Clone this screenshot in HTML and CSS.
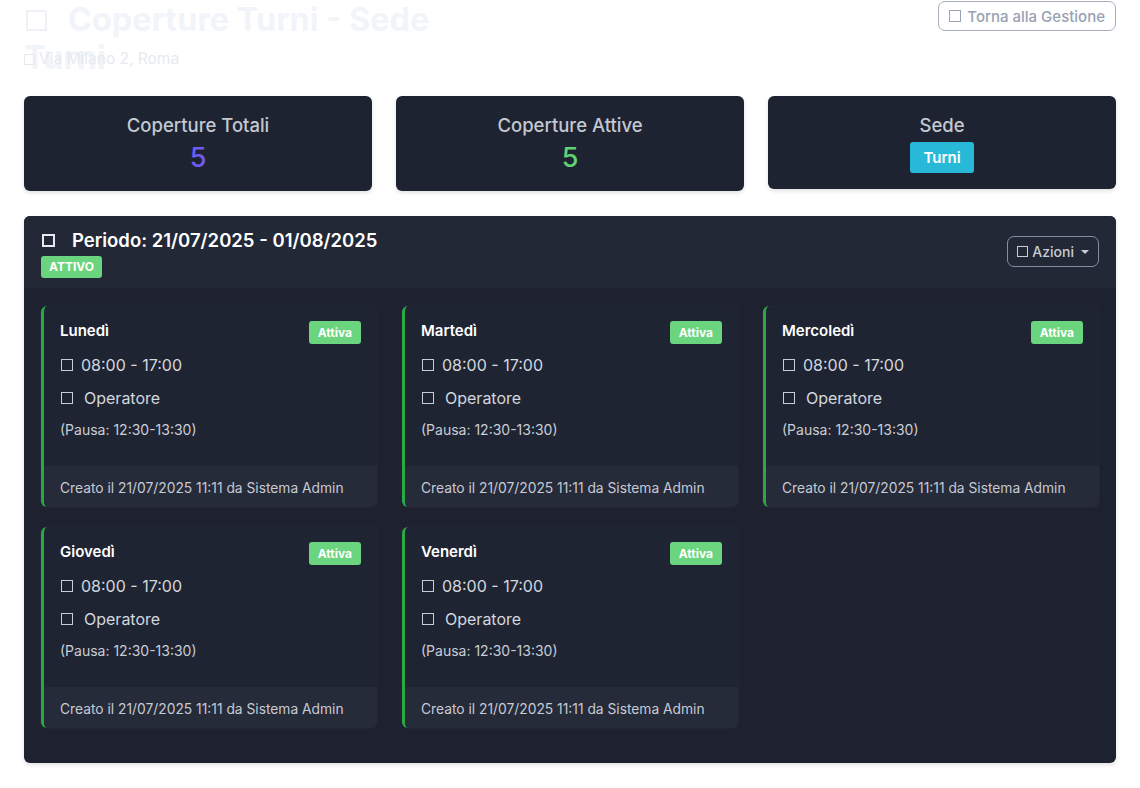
FILE: index.html
```html
<!DOCTYPE html>
<html lang="it">
<head>
<meta charset="utf-8">
<title>Coperture Turni</title>
<link rel="stylesheet" href="styles.css">
</head>
<body>
<div class="page">
  <div class="top">
    <div class="heading">
      <h1 class="title"><span class="ico ico-lg"></span>Coperture Turni - Sede Turni</h1>
      <p class="subtitle"><span class="ico ico-sm"></span>Via Milano 2, Roma</p>
    </div>
    <button class="btn-back"><span class="ico ico-btn"></span>Torna alla Gestione</button>
  </div>

  <div class="stats">
    <div class="stat">
      <div class="stat-label">Coperture Totali</div>
      <div class="stat-value purple">5</div>
    </div>
    <div class="stat">
      <div class="stat-label">Coperture Attive</div>
      <div class="stat-value green">5</div>
    </div>
    <div class="stat stat-sede">
      <div class="stat-label">Sede</div>
      <span class="badge-info">Turni</span>
    </div>
  </div>

  <div class="period">
    <div class="period-head">
      <div>
        <h2 class="period-title"><span class="ico ico-head"></span>Periodo: 21/07/2025 - 01/08/2025</h2>
        <span class="badge-green badge-upper">ATTIVO</span>
      </div>
      <button class="btn-actions"><span class="ico ico-btn2"></span>Azioni<span class="caret"></span></button>
    </div>
    <div class="period-body">
      <div class="shift">
        <div class="shift-main">
          <div class="shift-top"><span class="day">Lunedì</span><span class="badge-green">Attiva</span></div>
          <div class="row"><span class="ico ico-row"></span>08:00 - 17:00</div>
          <div class="row"><span class="ico ico-row"></span><span class="op">Operatore</span></div>
          <div class="pause">(Pausa: 12:30-13:30)</div>
        </div>
        <div class="shift-foot">Creato il 21/07/2025 11:11 da Sistema Admin</div>
      </div>
      <div class="shift">
        <div class="shift-main">
          <div class="shift-top"><span class="day">Martedì</span><span class="badge-green">Attiva</span></div>
          <div class="row"><span class="ico ico-row"></span>08:00 - 17:00</div>
          <div class="row"><span class="ico ico-row"></span><span class="op">Operatore</span></div>
          <div class="pause">(Pausa: 12:30-13:30)</div>
        </div>
        <div class="shift-foot">Creato il 21/07/2025 11:11 da Sistema Admin</div>
      </div>
      <div class="shift">
        <div class="shift-main">
          <div class="shift-top"><span class="day">Mercoledì</span><span class="badge-green">Attiva</span></div>
          <div class="row"><span class="ico ico-row"></span>08:00 - 17:00</div>
          <div class="row"><span class="ico ico-row"></span><span class="op">Operatore</span></div>
          <div class="pause">(Pausa: 12:30-13:30)</div>
        </div>
        <div class="shift-foot">Creato il 21/07/2025 11:11 da Sistema Admin</div>
      </div>
      <div class="shift">
        <div class="shift-main">
          <div class="shift-top"><span class="day">Giovedì</span><span class="badge-green">Attiva</span></div>
          <div class="row"><span class="ico ico-row"></span>08:00 - 17:00</div>
          <div class="row"><span class="ico ico-row"></span><span class="op">Operatore</span></div>
          <div class="pause">(Pausa: 12:30-13:30)</div>
        </div>
        <div class="shift-foot">Creato il 21/07/2025 11:11 da Sistema Admin</div>
      </div>
      <div class="shift">
        <div class="shift-main">
          <div class="shift-top"><span class="day">Venerdì</span><span class="badge-green">Attiva</span></div>
          <div class="row"><span class="ico ico-row"></span>08:00 - 17:00</div>
          <div class="row"><span class="ico ico-row"></span><span class="op">Operatore</span></div>
          <div class="pause">(Pausa: 12:30-13:30)</div>
        </div>
        <div class="shift-foot">Creato il 21/07/2025 11:11 da Sistema Admin</div>
      </div>
    </div>
  </div>
</div>
</body>
</html>
```

FILE: styles.css
```css
* { box-sizing: border-box; }
html, body { margin: 0; padding: 0; background: #ffffff; }
body {
  font-family: Inter, "Noto Sans", "Liberation Sans", sans-serif;
  color: #d1d5db;
}
.page { padding: 0 24px 24px 24px; }

.ico {
  display: inline-block;
  border-style: solid;
  flex: none;
}

.top {
  display: flex;
  justify-content: space-between;
  align-items: flex-start;
  height: 96px;
}
.heading { width: 440px; }
.title {
  margin: 0;
  padding-top: 1px;
  height: 40px;
  font-size: 32.4px;
  line-height: 38px;
  font-weight: 700;
  color: #f1f4f8;
}
.ico-lg {
  width: 21px; height: 21px;
  border-width: 2.5px;
  border-color: #eef2f6;
  margin: 0 21px 0 2px;
  vertical-align: 0px;
}
.subtitle {
  margin: 0;
  margin-top: 8px;
  font-size: 15.5px;
  line-height: 22px;
  color: #e6eaef;
  display: flex;
  align-items: center;
}
.ico-sm {
  width: 11px; height: 11px;
  border-width: 1.5px;
  border-color: #e6eaef;
  margin-right: 4px;
}

.btn-back {
  margin-top: 1px;
  height: 30px;
  padding: 0 10px;
  background: #fff;
  border: 1px solid #a5adbf;
  border-radius: 7px;
  font-family: inherit;
  font-size: 15px;
  font-weight: 500;
  color: #98a1b3;
  display: flex;
  align-items: center;
}
.ico-btn {
  width: 12px; height: 12px;
  border-width: 1.5px;
  border-color: #98a1b3;
  margin-right: 6px;
}

.stats {
  display: grid;
  grid-template-columns: repeat(3, 1fr);
  gap: 24px;
  margin-bottom: 25px;
}
.stat {
  background: #1e2332;
  border-radius: 6px;
  height: 95px;
  box-shadow: 0 2px 4px rgba(0,0,0,0.12);
  display: flex;
  flex-direction: column;
  align-items: center;
  padding-top: 18px;
}
.stat-sede { height: 93px; }
.stat-label {
  font-size: 18.5px;
  line-height: 23px;
  font-weight: 500;
  color: #c3c8d1;
}
.stat-value {
  font-size: 27px;
  line-height: 32px;
  margin-top: 5px;
  font-weight: 500;
}
.purple { color: #6d5cf3; }
.green { color: #5fd274; }
.badge-info {
  margin-top: 5px;
  background: #27b9d7;
  color: #ffffff;
  font-size: 15px;
  font-weight: 600;
  line-height: 31px;
  height: 31px;
  padding: 0 13px;
  border-radius: 3px;
}

.period {
  background: #1d2130;
  border-radius: 6px;
  overflow: hidden;
  box-shadow: 0 2px 4px rgba(0,0,0,0.12);
}
.period-head {
  background: #232837;
  height: 72px;
  padding: 12px 17px 0 17px;
  display: flex;
  justify-content: space-between;
  align-items: flex-start;
}
.period-title {
  margin: 0;
  font-size: 18.5px;
  line-height: 24px;
  font-weight: 600;
  color: #ffffff;
  display: flex;
  align-items: center;
}
.ico-head {
  width: 13px; height: 13px;
  border-width: 2px;
  border-color: #e6e9ee;
  margin: 0 17px 0 1px;
}
.badge-green {
  display: inline-block;
  background: #6bd47e;
  color: #ffffff;
  font-size: 12px;
  font-weight: 700;
  line-height: 23px;
  height: 23px;
  padding: 0 9px;
  border-radius: 3px;
}
.badge-upper {
  margin-top: 4px;
  height: 22px;
  line-height: 22px;
  padding: 0 8px;
}
.btn-actions {
  margin-top: 8px;
  height: 31px;
  padding: 0 9px;
  background: transparent;
  border: 1px solid #858da0;
  border-radius: 7px;
  font-family: inherit;
  font-size: 14px;
  font-weight: 500;
  color: #c7ccd5;
  display: flex;
  align-items: center;
}
.ico-btn2 {
  width: 11px; height: 11px;
  border-width: 1.5px;
  border-color: #c7ccd5;
  margin-right: 4px;
}
.caret {
  width: 0; height: 0;
  border-left: 4px solid transparent;
  border-right: 4px solid transparent;
  border-top: 4px solid #c7ccd5;
  margin-left: 7px;
}

.period-body {
  display: grid;
  grid-template-columns: repeat(3, 1fr);
  column-gap: 25px;
  row-gap: 20px;
  padding: 18px 17px 35px 17px;
}
.shift {
  background: #1f2433;
  border-left: 3px solid #2aa846;
  border-radius: 6px;
  overflow: hidden;
  display: flex;
  flex-direction: column;
  height: 201px;
  box-shadow: 0 0 0 1px rgba(255,255,255,0.02);
}
.shift-main {
  flex: 1;
  padding: 14px 16px 0 16px;
}
.shift-top {
  display: flex;
  justify-content: space-between;
  align-items: center;
  height: 24px;
  margin-bottom: 10px;
}
.day {
  font-size: 15px;
  font-weight: 600;
  color: #ffffff;
  margin-top: -4px;
}
.row {
  display: flex;
  align-items: center;
  height: 22px;
  font-size: 16px;
  color: #d3d7de;
  margin-bottom: 11px;
}
.ico-row {
  width: 12px; height: 12px;
  border-width: 1.5px;
  border-color: #c9cdd5;
  margin: 0 8px 0 1px;
}
.op { margin-left: 3px; }
.pause {
  font-size: 14px;
  line-height: 20px;
  color: #c9cdd5;
}
.shift-foot {
  background: #262b3a;
  height: 41px;
  line-height: 41px;
  padding: 2px 16px 0 16px;
  font-size: 13.8px;
  color: #c6cad3;
}
```
